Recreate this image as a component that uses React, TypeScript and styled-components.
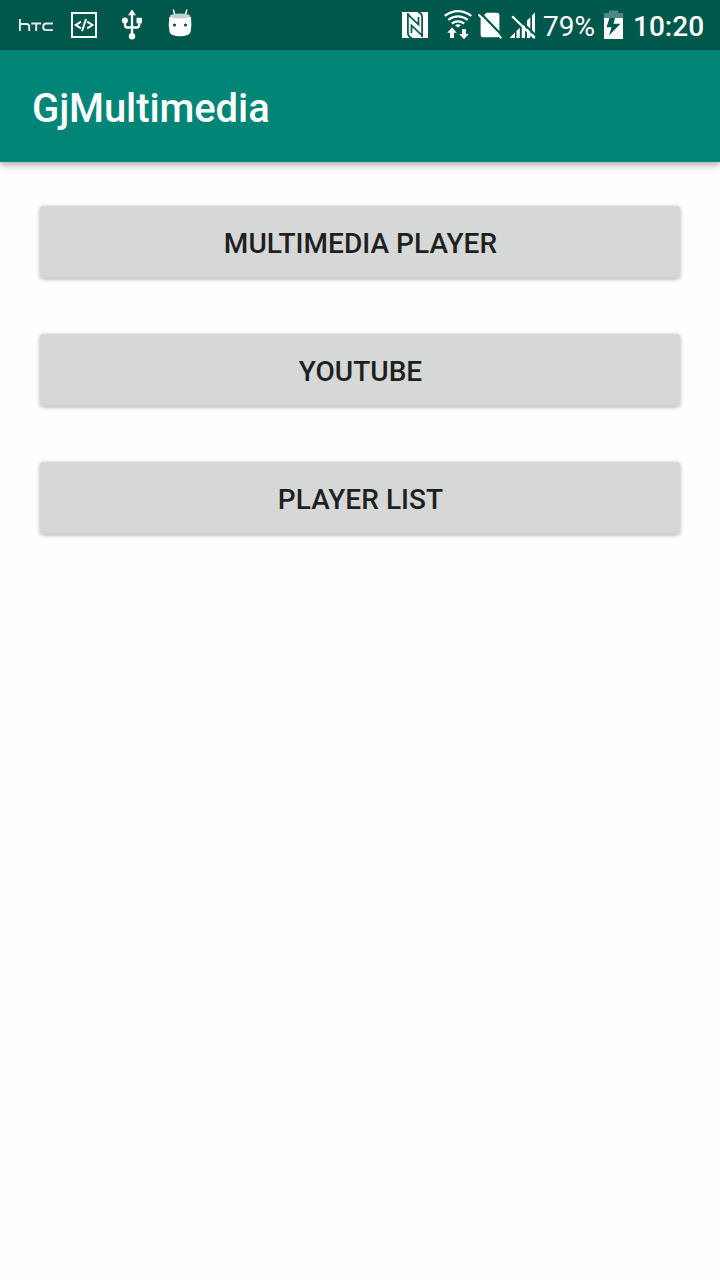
import React from 'react';
import styled, { createGlobalStyle } from 'styled-components';

const GlobalStyle = createGlobalStyle`
  body {
    margin: 0;
    background: #fefefe;
    font-family: Roboto, "Liberation Sans", sans-serif;
  }
`;

const Screen = styled.div`
  display: flex;
  flex-direction: column;
  width: 720px;
  height: 1280px;
  overflow: hidden;
  background: #fefefe;
`;

const StatusBar = styled.div`
  display: flex;
  align-items: center;
  justify-content: space-between;
  height: 50px;
  box-sizing: border-box;
  padding: 0 16px 0 18px;
  background: #00574b;
  color: #fff;
`;

const StatusGroup = styled.div`
  display: flex;
  align-items: center;
`;

const Icon = styled.svg<{ $gap?: number }>`
  display: block;
  flex: none;
  height: 50px;
  margin-left: ${({ $gap = 0 }) => $gap}px;
`;

const StatusText = styled.span<{ $gap: number; $width: number; $weight?: number }>`
  height: 50px;
  width: ${({ $width }) => $width}px;
  margin-left: ${({ $gap }) => $gap}px;
  font-size: 28px;
  line-height: 54px;
  font-weight: ${({ $weight = 400 }) => $weight};
  white-space: nowrap;
`;

const AppBar = styled.header`
  display: flex;
  align-items: center;
  height: 112px;
  box-sizing: border-box;
  padding: 6px 32px 0;
  background: #008577;
  box-shadow: 0 3px 7px rgba(0, 0, 0, 0.33);
`;

const Title = styled.h1`
  margin: 0;
  font-size: 40px;
  font-weight: 500;
  line-height: 48px;
  letter-spacing: -0.1px;
  color: #fff;
`;

const Menu = styled.main`
  display: flex;
  flex-direction: column;
  gap: 56px;
  padding: 44px 40px;
`;

const MenuButton = styled.button`
  height: 72px;
  padding: 4px 0 0 1px;
  border: 0;
  border-radius: 4px;
  background: #d6d7d7;
  box-shadow: 0 1px 4px rgba(0, 0, 0, 0.33);
  color: #1e1f1f;
  font: 500 28px/32px Roboto, "Liberation Sans", sans-serif;
  letter-spacing: 0.04px;
  text-transform: uppercase;
`;

const HtcIcon = () => (
  <Icon width="36" viewBox="18 0 36 50" fill="none" stroke="#e8f0ee" strokeWidth="1.9">
    <path d="M19.9 19v12M19.9 24h6.600q2.700 0 2.700 2.600V31M31.300 23.500h9.800M36.200 23.500V31M53 23.500h-6.500q-3.300 0-3.300 2.900v.8q0 2.900 3.300 2.900H53" />
  </Icon>
);

const CodeIcon = () => (
  <Icon $gap={17} width="26" viewBox="71 0 26 50" fill="none" stroke="#fff">
    <path d="M72 13h24v24H72z" strokeWidth="2" />
    <path d="M81 21.700l-5.200 3.300 5.200 3.300M87.200 21.700l5.200 3.300-5.200 3.300M86 19l-4 12.300" strokeWidth="2" />
  </Icon>
);

const UsbIcon = () => (
  <Icon $gap={24} width="22" viewBox="121 0 22 50" fill="#fff">
    <path d="M132 9.500l4 5.700h-8z" />
    <circle cx="132" cy="36.300" r="3.200" />
    <circle cx="124.900" cy="20.600" r="3" />
    <path d="M136.500 17.800h5.500v5.500h-5.500z" />
    <path d="M132 14v21M125 21v4q0 2.500 2.500 2.500h9.200q2.500 0 2.500-2.500V22" fill="none" stroke="#fff" strokeWidth="2.300" />
  </Icon>
);

const AndroidIcon = () => (
  <Icon $gap={25} width="24" viewBox="168 0 24 50">
    <path d="M173.200 9.500l1.900 6M187 9.500l-1.900 6" stroke="#fff" strokeWidth="1.500" />
    <path d="M169.300 17q-1.200 8 .2 14.500q.9 4.800 10.500 4.800t10.700-4.800q1.200-6.500.3-14.500z" fill="#fff" />
    <ellipse cx="180.100" cy="16" rx="10.300" ry="2.500" fill="#bdd2ce" />
    <circle cx="174.500" cy="25" r="1.600" fill="#00574b" />
    <circle cx="185.500" cy="25" r="1.600" fill="#00574b" />
  </Icon>
);

const NfcIcon = () => (
  <Icon width="26" viewBox="402 0 26 50">
    <path d="M402 12h26v26h-26z" fill="#fff" />
    <g fill="none" stroke="#00574b" strokeWidth="1.700">
      <path d="M407.900 13v19.500q0 4.500 4 5.300M422.100 37V17.500q0-4.500-4-5.300" />
      <path d="M407.500 14.200l11 10.300V17M422.500 35.800l-11-10.300V33" />
    </g>
  </Icon>
);

const WifiIcon = () => (
  <Icon $gap={16} width="28" viewBox="444 0 28 50">
    <g fill="none" stroke="#fff" strokeWidth="2.300">
      <path d="M444.700 15.900q13.300-9.600 26.600 0" />
      <path d="M448.200 19.900q9.800-7 19.600 0" />
      <path d="M451.800 23.500q6.200-4.400 12.400 0" />
    </g>
    <path d="M455 25.200q3-2 6 0l-3 2.300z" fill="#fff" />
    <path d="M452 27.500l4.800 5.300h-2.800V38h-4v-5.200h-2.800zM464 39.200l-4.800-5.300h2.800V29h4v4.900h2.800z" fill="#fff" />
  </Icon>
);

const NoSimIcon = () => (
  <Icon $gap={6} width="24" viewBox="478 0 24 50">
    <path d="M486.500 12.800H497q2.400 0 2.400 2.400V35q0 2.200-2.400 2.200h-14q-2.400 0-2.400-2.200V18.500z" fill="#fff" />
    <path d="M480 12.500l23.500 24.500" stroke="#00574b" strokeWidth="2.200" />
    <path d="M478.500 14.500l22.700 23.500" stroke="#fff" strokeWidth="2.100" />
  </Icon>
);

const NoSignalIcon = () => (
  <Icon $gap={7} width="27" viewBox="509 0 27 50">
    <path d="M509.500 38l5.500-5.500V38zM516.500 38v-7l3.300-3.300V38zM521.800 38V25.700l3.300-3.300V38zM527 38V20.500l3.300-3.300V38zM532 38V15.500l3-3V38z" fill="#fff" />
    <path d="M514 14.500l23 22" stroke="#00574b" strokeWidth="2.200" />
    <path d="M512.200 16.300l22.500 22" stroke="#fff" strokeWidth="2.300" />
  </Icon>
);

const BatteryIcon = () => (
  <Icon $gap={9} width="19" viewBox="604 0 19 50">
    <path d="M609 10.500h9V13h5v5h-19v-5h5z" fill="#4d8981" />
    <path d="M604 18h19v21h-19z" fill="#fff" />
    <path d="M609.500 18h5.500l-1.500 5.800h7L609 35.500l2.500-8.300h-5z" fill="#00574b" />
  </Icon>
);

const entries = ['Multimedia Player', 'YouTube', 'Player List'];

export default function App() {
  return (
    <Screen>
      <GlobalStyle />
      <StatusBar>
        <StatusGroup>
          <HtcIcon />
          <CodeIcon />
          <UsbIcon />
          <AndroidIcon />
        </StatusGroup>
        <StatusGroup>
          <NfcIcon />
          <WifiIcon />
          <NoSimIcon />
          <NoSignalIcon />
          <StatusText $gap={7} $width={52}>79%</StatusText>
          <BatteryIcon />
          <StatusText $gap={10} $width={71} $weight={500}>10:20</StatusText>
        </StatusGroup>
      </StatusBar>
      <AppBar>
        <Title>GjMultimedia</Title>
      </AppBar>
      <Menu>
        {entries.map((label) => (
          <MenuButton key={label}>{label}</MenuButton>
        ))}
      </Menu>
    </Screen>
  );
}
